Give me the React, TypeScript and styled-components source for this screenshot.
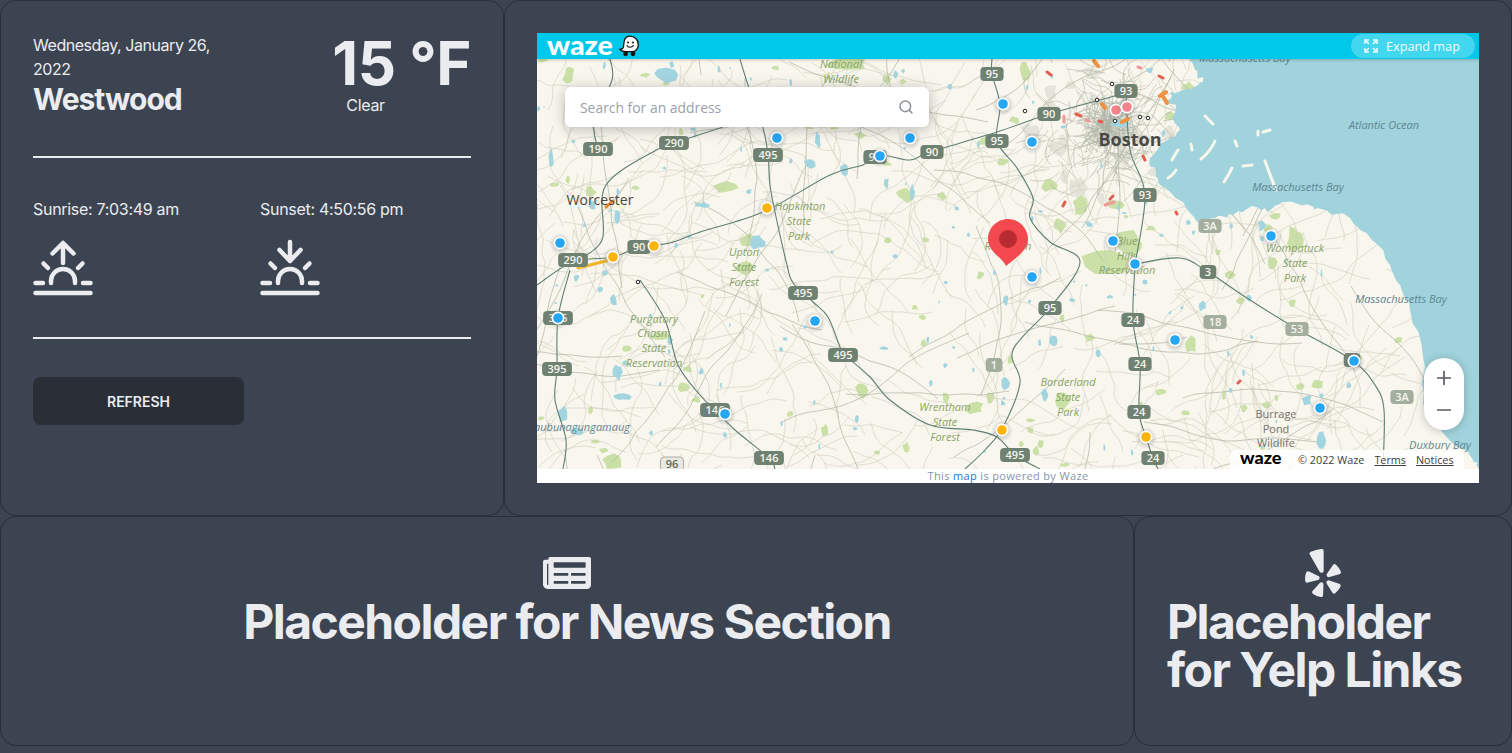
import React from "react";
import styled, { createGlobalStyle } from "styled-components";
import { FaNewspaper, FaYelp } from "react-icons/fa";
import { Search, Plus, Minus } from "lucide-react";

const GlobalStyle = createGlobalStyle`
  html, body {
    margin: 0;
    background: #3d4451;
    color: #ebecf0;
    font-family: Inter, "Liberation Sans", sans-serif;
    overflow: hidden;
  }
`;

const Page = styled.div`
  display: grid;
  grid-template-columns: 504px 630px 378px;
  grid-template-rows: 516px 230px;
  width: 1512px;
`;

const Card = styled.section<{ $wide?: boolean }>`
  grid-column: ${(p) => (p.$wide ? "span 2" : "auto")};
  box-sizing: border-box;
  border: 1px solid #2a2e37;
  border-radius: 16px;
  background: #3d4451;
  padding: 32px;
`;

const WeatherTop = styled.div`
  display: flex;
  justify-content: space-between;
  height: 123px;
  border-bottom: 2px solid #ebecf0;
`;

const Place = styled.div`
  width: 200px;
`;

const DateText = styled.div`
  font-size: 16px;
  line-height: 24px;
  letter-spacing: -0.45px;
`;

const City = styled.div`
  font-size: 30px;
  line-height: 36px;
  font-weight: 700;
  letter-spacing: -1px;
`;

const Temperature = styled.div`
  font-size: 60px;
  line-height: 60px;
  font-weight: 700;
  letter-spacing: -0.5px;
`;

const Condition = styled.div`
  font-size: 16px;
  line-height: 24px;
  padding-left: 14px;
  letter-spacing: -0.3px;
`;

const SunRow = styled.div`
  display: grid;
  grid-template-columns: 227px 1fr;
  height: 181px;
  padding-top: 41px;
  box-sizing: border-box;
  border-bottom: 2px solid #ebecf0;
`;

const SunTime = styled.div`
  font-size: 16px;
  line-height: 20px;
  margin-bottom: 20px;
  letter-spacing: -0.3px;
`;

const SunIcon = styled.svg`
  display: block;
  width: 60px;
  height: 60px;
  fill: none;
  stroke: #ebecf0;
  stroke-width: 4.5;
  stroke-linecap: round;
  stroke-linejoin: round;
`;

const RefreshButton = styled.button`
  display: block;
  width: 211px;
  height: 48px;
  margin-top: 38px;
  border: 0;
  border-radius: 8px;
  background: #2a2e37;
  color: #ebecf0;
  font-family: inherit;
  font-size: 14px;
  font-weight: 600;
`;

const Placeholder = styled.div<{ $centered?: boolean }>`
  display: flex;
  flex-direction: column;
  align-items: ${(p) => (p.$centered ? "center" : "flex-start")};
  text-align: ${(p) => (p.$centered ? "center" : "left")};
  font-size: 48px;
  line-height: 48px;
  font-weight: 700;
  letter-spacing: -1.55px;
`;

const IconLine = styled.div`
  align-self: center;
  height: 49px;
  svg {
    display: block;
  }
`;

const MapFrame = styled.div`
  position: relative;
  width: 942px;
  height: 450px;
  background: #fff;
  overflow: hidden;
`;

const MapHeader = styled.header`
  display: flex;
  align-items: center;
  justify-content: space-between;
  height: 26px;
  padding: 0 4px 0 10px;
  background: #00c8ea;
  box-shadow: 0 1px 3px rgba(0, 0, 0, 0.2);
  position: relative;
  z-index: 1;
`;

const Brand = styled.div`
  display: flex;
  align-items: center;
  gap: 5px;
`;

const WazeWord = styled.span<{ $dark?: boolean }>`
  display: inline-block;
  width: ${(p) => (p.$dark ? "42px" : "66px")};
  font-family: Lato, Inter, sans-serif;
  font-weight: 900;
  font-size: ${(p) => (p.$dark ? "17px" : "27px")};
  line-height: 1;
  color: ${(p) => (p.$dark ? "#000" : "#fff")};
  transform: scaleX(1.06);
  transform-origin: left;
  position: relative;
  top: -2px;
`;

const ExpandButton = styled.div`
  display: flex;
  align-items: center;
  gap: 8px;
  width: 124px;
  height: 24px;
  box-sizing: border-box;
  padding-left: 13px;
  border-radius: 12px;
  background: rgba(255, 255, 255, 0.26);
  color: #f0fcff;
  font-family: "Open Sans", sans-serif;
  font-size: 12.7px;
`;

const MapCanvas = styled.svg`
  display: block;
  width: 942px;
  height: 410px;
`;

const MapLabel = styled.text<{ $kind: "park" | "water" | "city" | "big" | "area" }>`
  font-family: "Open Sans", sans-serif;
  text-anchor: middle;
  font-size: ${(p) => (p.$kind === "big" ? "18px" : p.$kind === "city" ? "14px" : "11px")};
  font-weight: ${(p) => (p.$kind === "big" ? 700 : 400)};
  font-style: ${(p) => (p.$kind === "park" || p.$kind === "water" ? "italic" : "normal")};
  fill: ${(p) =>
    p.$kind === "park"
      ? "#88a36a"
      : p.$kind === "water"
        ? "#5f8593"
        : p.$kind === "area"
          ? "#77736c"
          : "#4a4845"};
`;

const ShieldText = styled.text`
  font-family: "Open Sans", sans-serif;
  font-size: 11px;
  font-weight: 600;
  text-anchor: middle;
`;

const SearchBox = styled.div`
  position: absolute;
  left: 28px;
  top: 54px;
  display: flex;
  align-items: center;
  justify-content: space-between;
  width: 364px;
  height: 40px;
  box-sizing: border-box;
  padding: 0 15px;
  border-radius: 6px;
  background: #fff;
  box-shadow: 0 2px 14px rgba(70, 70, 70, 0.35);
  color: #9aa1ad;
  font-family: "Open Sans", sans-serif;
  font-size: 13.9px;
  svg {
    color: #8b8f96;
  }
`;

const ZoomControl = styled.div`
  position: absolute;
  left: 887px;
  top: 325px;
  display: flex;
  flex-direction: column;
  align-items: center;
  justify-content: center;
  gap: 10px;
  width: 40px;
  height: 72px;
  border-radius: 20px;
  background: #fff;
  box-shadow: 0 1px 8px rgba(60, 60, 60, 0.3);
  color: #55585c;
`;

const Attribution = styled.div`
  position: absolute;
  left: 693px;
  top: 417px;
  display: flex;
  align-items: center;
  width: 234px;
  height: 19px;
  box-sizing: border-box;
  padding-left: 10px;
  border-radius: 6px 6px 0 0;
  background: rgba(255, 255, 255, 0.85);
  color: #3c3f44;
  font-family: "Open Sans", sans-serif;
  font-size: 10.8px;
`;

const Copyright = styled.span`
  margin-left: 16px;
  margin-right: 10px;
`;

const AttributionLink = styled.span`
  margin-right: 10px;
  text-decoration: underline;
`;

const MapCredit = styled.div`
  height: 14px;
  text-align: center;
  font-family: "Open Sans", sans-serif;
  font-size: 11px;
  line-height: 14px;
  letter-spacing: 0.35px;
  color: #8696a8;
  b {
    font-weight: 400;
    color: #1c76cc;
  }
`;

type Shield = [number, number, string, number?];
type Patch = [number, number, number, number];

const HIGHWAYS = [
  "740 59 748 85 763 128 768 155 770 185 775 212 787 265 793 283 813 302 828 317 840 347 845 355 870 377 890 400 930 425 973 430 997 437 1015 455 1040 469",
  "537 285 573 262 613 257 639 247 670 243 700 232 763 212 830 175 863 165 880 155 910 160 930 152 997 132 1049 114 1100 100 1130 92",
  "573 262 602 240 606 185 660 148 674 143 723 127",
  "598 149 594 120 612 80 610 59",
  "992 59 992 74 1000 105 997 141 1017 168 1033 198 1030 218 1050 242 1080 262 1050 308 1013 350 1020 383 1003 427 985 450 965 469",
  "1135 264 1133 320 1140 364 1139 412 1146 437 1153 458 1158 469",
  "1135 264 1180 258 1208 272 1250 300 1297 329 1352 360 1375 385 1384 410 1383 469",
  "1126 91 1130 150 1145 195 1135 264",
  "640 280 665 320 678 365 700 395 715 410 735 430 769 458 775 469",
  "570 270 558 318 557 369 555 400 566 440 563 469",
];

const SHIELDS: Shield[] = [
  [992, 74, "95"], [1126, 91, "93"], [1049, 114, "90"], [598, 149, "190"], [674, 143, "290"],
  [768, 155, "495"], [875, 157, "90"], [932, 152, "90"], [997, 141, "95"], [1145, 195, "93"],
  [1210, 226, "3A", 1], [639, 247, "90"], [573, 260, "290"], [1208, 272, "3"], [803, 293, "495"],
  [1050, 308, "95"], [994, 365, "1", 1], [1133, 320, "24"], [1215, 322, "18", 1], [1297, 329, "53", 1],
  [843, 355, "495"], [557, 369, "395"], [1140, 364, "24"], [1402, 397, "3A", 1], [1139, 412, "24"],
  [715, 410, "146"], [769, 458, "146"], [672, 464, "96", 2], [1015, 455, "495"], [1153, 458, "24"],
  [558, 318, "395"], [1352, 360, "3"],
];

const BLUE_PINS = [
  [1003, 104], [777, 138], [910, 138], [880, 156], [1032, 142], [560, 243], [558, 318], [815, 321],
  [725, 414], [1113, 241], [1135, 264], [1032, 277], [1175, 340], [1354, 361], [1320, 408], [1271, 236],
];
const ORANGE_PINS = [[767, 208], [654, 246], [613, 257], [1002, 430], [1146, 437]];
const PINK_PINS = [[1116, 110], [1127, 107]];
const CAMERAS = [[1112, 84], [1097, 100], [1025, 111], [1115, 121], [1140, 117], [1148, 118], [638, 282]];

const PARKS: Patch[] = [
  [569, 76, 6, 10], [847, 64, 20, 6], [1106, 262, 22, 14], [1130, 244, 18, 12], [1050, 185, 8, 7],
  [1080, 205, 8, 10], [1296, 240, 11, 14], [1272, 262, 5, 7], [1268, 228, 6, 4], [1062, 400, 10, 8],
  [748, 240, 11, 6], [744, 268, 9, 8], [661, 336, 12, 5], [627, 349, 6, 3], [990, 398, 4, 6],
  [862, 390, 8, 9], [975, 408, 9, 6], [946, 398, 5, 5], [1190, 345, 6, 9], [1318, 385, 6, 5],
  [1300, 386, 5, 4], [1160, 392, 6, 4], [612, 462, 11, 8], [860, 135, 6, 4], [834, 126, 5, 4],
  [905, 195, 9, 7], [1025, 72, 5, 10], [1115, 205, 9, 5], [725, 188, 12, 6], [590, 192, 6, 5],
  [1060, 225, 6, 8], [1015, 120, 5, 4], [1230, 275, 5, 4], [1398, 340, 5, 3], [942, 196, 5, 4],
  [1320, 50, 1, 1], [825, 430, 4, 6], [696, 400, 5, 3], [1170, 117, 5, 5], [1188, 87, 6, 5],
  [1010, 360, 3, 5], [1090, 338, 5, 4], [1244, 408, 4, 5], [1030, 430, 4, 3], [1240, 300, 4, 4],
];

const LAKES: Patch[] = [
  [664, 75, 13, 7], [810, 163, 6, 5], [818, 140, 3, 8], [844, 170, 4, 7], [551, 158, 3, 9],
  [592, 205, 4, 5], [703, 205, 7, 3], [758, 242, 8, 7], [886, 183, 3, 6], [912, 192, 3, 9],
  [617, 218, 4, 8], [613, 300, 4, 7], [618, 372, 5, 8], [622, 397, 9, 4], [563, 415, 6, 8],
  [577, 431, 8, 4], [1006, 300, 3, 6], [1072, 300, 4, 2], [1110, 297, 3, 2], [1053, 340, 4, 6],
  [1203, 305, 4, 6], [1262, 225, 4, 6], [1307, 400, 5, 5], [1322, 440, 5, 8], [1349, 385, 3, 3],
  [1089, 224, 4, 3], [1185, 200, 2, 4], [1006, 383, 4, 8], [1045, 395, 4, 6], [884, 348, 5, 2],
  [805, 327, 3, 2], [1145, 282, 3, 3], [1010, 260, 2, 3], [670, 340, 3, 5], [600, 290, 3, 3],
  [730, 68, 1, 1], [1150, 70, 4, 3], [1120, 124, 12, 4],
];

const makeRandom = (seed: number) => {
  let s = seed;
  return () => {
    s = (s * 16807) % 2147483647;
    return (s - 1) / 2147483646;
  };
};

// Catmull-Rom through the listed points, so roads bend instead of kinking
function smooth(points: number[][]) {
  let d = `M${points[0][0]} ${points[0][1]}`;
  for (let i = 0; i < points.length - 1; i++) {
    const a = points[Math.max(i - 1, 0)];
    const b = points[i];
    const c = points[i + 1];
    const e = points[Math.min(i + 2, points.length - 1)];
    d += ` C${(b[0] + (c[0] - a[0]) / 6).toFixed(1)} ${(b[1] + (c[1] - a[1]) / 6).toFixed(1)} ${(c[0] - (e[0] - b[0]) / 6).toFixed(1)} ${(c[1] - (e[1] - b[1]) / 6).toFixed(1)} ${c[0]} ${c[1]}`;
  }
  return d;
}

function toPoints(list: string) {
  const nums = list.split(" ").map(Number);
  const points: number[][] = [];
  for (let i = 0; i < nums.length; i += 2) points.push([nums[i], nums[i + 1]]);
  return points;
}

function wander(rand: () => number, x0: number, y0: number, steps: number, stepLen: number, bend: number) {
  let x = x0;
  let y = y0;
  let angle = rand() * Math.PI * 2;
  const points = [[Math.round(x), Math.round(y)]];
  for (let k = 0; k < steps; k++) {
    angle += (rand() - 0.5) * bend;
    const len = stepLen * (0.6 + rand() * 0.8);
    x += Math.cos(angle) * len;
    y += Math.sin(angle) * len;
    points.push([Math.round(x), Math.round(y)]);
  }
  return smooth(points);
}

function blob(rand: () => number, x: number, y: number, rx: number, ry: number) {
  const n = 9;
  let d = "";
  for (let k = 0; k < n; k++) {
    const a = (k / n) * Math.PI * 2;
    const r = 0.62 + rand() * 0.6;
    d += `${k ? "L" : "M"}${(x + Math.cos(a) * rx * r).toFixed(1)} ${(y + Math.sin(a) * ry * r).toFixed(1)}`;
  }
  return d + "Z";
}

const roadRand = makeRandom(4242);
const MINOR_ROADS = Array.from({ length: 520 }, () =>
  wander(roadRand, 537 + roadRand() * 890, 59 + roadRand() * 410, 5 + Math.floor(roadRand() * 6), 11, 0.9),
);
const MEDIUM_ROADS = Array.from({ length: 60 }, () =>
  wander(roadRand, 537 + roadRand() * 860, 59 + roadRand() * 410, 9, 20, 0.45),
);
const CITY_ROADS = Array.from({ length: 240 }, () => {
  const a = roadRand() * Math.PI * 2;
  const r = roadRand() * roadRand() * 105;
  return wander(roadRand, 1108 + Math.cos(a) * r, 128 + Math.sin(a) * r * 0.9, 3, 9, 1.2);
});

const patchRand = makeRandom(777);
const PARK_SHAPES = PARKS.map(([x, y, rx, ry]) => blob(patchRand, x, y, rx, ry));
const LAKE_SHAPES = LAKES.map(([x, y, rx, ry]) => blob(patchRand, x, y, rx, ry));
const SMALL_LAKES = Array.from({ length: 130 }, () =>
  blob(patchRand, 537 + patchRand() * 860, 59 + patchRand() * 410, 0.8 + patchRand() * 2, 1 + patchRand() * 3),
);
const SMALL_PARKS = Array.from({ length: 70 }, () =>
  blob(patchRand, 537 + patchRand() * 860, 59 + patchRand() * 410, 2 + patchRand() * 4, 2 + patchRand() * 3),
);
const CITY_PATCHES = Array.from({ length: 26 }, () => {
  const a = patchRand() * Math.PI * 2;
  const r = patchRand() * 85;
  return blob(patchRand, 1105 + Math.cos(a) * r, 130 + Math.sin(a) * r, 4 + patchRand() * 7, 4 + patchRand() * 7);
});

const COAST_POINTS = toPoints(
  "1190 59 1196 70 1203 82 1190 90 1172 92 1168 100 1176 108 1172 118 1180 130 1168 140 1150 158 1156 172 1160 185 1183 202 1197 222 1218 216 1233 215 1252 206 1267 212 1283 202 1317 208 1350 218 1372 240 1390 265 1400 285 1410 310 1423 357 1423 403 1443 433 1473 460 1479 469",
);

function makeCoast() {
  const rand = makeRandom(31);
  let d = `M${COAST_POINTS[0][0]} ${COAST_POINTS[0][1]}`;
  for (let i = 1; i < COAST_POINTS.length; i++) {
    const [x0, y0] = COAST_POINTS[i - 1];
    const [x1, y1] = COAST_POINTS[i];
    for (let k = 1; k <= 4; k++) {
      const t = k / 4;
      const jx = k === 4 ? 0 : (rand() - 0.5) * 5;
      const jy = k === 4 ? 0 : (rand() - 0.5) * 5;
      d += `L${(x0 + (x1 - x0) * t + jx).toFixed(1)} ${(y0 + (y1 - y0) * t + jy).toFixed(1)}`;
    }
  }
  return d + "L1479 59Z";
}

const COAST = makeCoast();

const ISLANDS = [
  "M1215 141Q1210 152 1201 159",
  "M1178 150Q1174 156 1172 160",
  "M1191 144L1192 150",
  "M1235 141L1237 146",
  "M1232 168Q1228 176 1224 182",
  "M1243 166L1252 165",
  "M1265 161Q1270 175 1276 190",
  "M1176 170Q1172 176 1168 178",
  "M1258 131L1258 135",
  "M1263 132L1270 130",
  "M1205 116L1213 124",
];

function SunriseIcon() {
  return (
    <SunIcon viewBox="0 0 60 60">
      <path d="M2.5 54h55M2.5 44h7.5M50 44h7.5M18 44v-2a12 12 0 0 1 24 0v2M10.5 24.5l4.5 4.5M49.5 24.5L45 29" />
      <path d="M30 24V5M19.5 14.5L30 4l10.5 10.5" />
    </SunIcon>
  );
}

function SunsetIcon() {
  return (
    <SunIcon viewBox="0 0 60 60">
      <path d="M2.5 54h55M2.5 44h7.5M50 44h7.5M18 44v-2a12 12 0 0 1 24 0v2M10.5 24.5l4.5 4.5M49.5 24.5L45 29" />
      <path d="M30 3v19M19.5 11L30 22l10.5-11" />
    </SunIcon>
  );
}

function Wazer() {
  return (
    <svg width="22" height="22" viewBox="0 0 22 22">
      <path
        d="M11.5 1.2c5 0 8.8 3.6 8.8 8.2 0 3.6-1.9 6-4.6 7.3H8.1c-1.9 0-4.7-.6-6.2-2.4 2.2-.2 3.2-.9 3.6-2.3C6 6 6.5 1.2 11.5 1.2z"
        fill="#fff"
        stroke="#111"
        strokeWidth="1.3"
      />
      <circle cx="10" cy="7.4" r="1" fill="#111" />
      <circle cx="15" cy="7.4" r="1" fill="#111" />
      <path d="M9 10.6c1 2 4.8 2.2 6.4 0" fill="none" stroke="#111" strokeWidth="1.1" strokeLinecap="round" />
      <circle cx="7.6" cy="18.8" r="2.4" fill="#111" />
      <circle cx="15" cy="18.8" r="2.4" fill="#111" />
    </svg>
  );
}

function ExpandIcon() {
  return (
    <svg width="14" height="14" viewBox="0 0 14 14" fill="none" stroke="#f0fcff" strokeWidth="1.5">
      <path d="M1 5V1h4M9 1h4v4M13 9v4H9M5 13H1V9" />
      <path d="M1.5 1.5L5 5M12.5 1.5L9 5M12.5 12.5L9 9M1.5 12.5L5 9" />
    </svg>
  );
}

function RoadShield({ item }: { item: Shield }) {
  const [x, y, label, tone] = item;
  const width = label.length * 6.6 + 10;
  const fill = tone === 2 ? "#e8e8df" : tone === 1 ? "#a4ae9f" : "#6f8272";
  return (
    <g>
      <rect x={x - width / 2} y={y - 7} width={width} height={14} rx={4} fill={fill} stroke={tone === 2 ? "#a9ada3" : "none"} strokeWidth={1} />
      <ShieldText x={x} y={y + 4} fill={tone === 2 ? "#5c6a5f" : "#f6f6ee"}>
        {label}
      </ShieldText>
    </g>
  );
}

function Pin({ x, y, color }: { x: number; y: number; color: string }) {
  return (
    <g>
      <circle cx={x} cy={y + 1} r={11} fill="url(#pinShadow)" />
      <circle cx={x} cy={y} r={6.5} fill="#fff" />
      <circle cx={x} cy={y} r={4.8} fill={color} />
    </g>
  );
}

function WazeMap() {
  return (
    <MapFrame>
      <MapHeader>
        <Brand>
          <WazeWord>waze</WazeWord>
          <Wazer />
        </Brand>
        <ExpandButton>
          <ExpandIcon />
          Expand map
        </ExpandButton>
      </MapHeader>
      <MapCanvas viewBox="537 59 942 410">
        <defs>
          <radialGradient id="pinShadow">
            <stop offset="50%" stopColor="#777" stopOpacity="0.3" />
            <stop offset="100%" stopColor="#777" stopOpacity="0" />
          </radialGradient>
        </defs>
        <rect x="537" y="59" width="942" height="410" fill="#f8f6ed" />
        <g fill="#e4e4da">
          {CITY_PATCHES.map((d, i) => (
            <path key={i} d={d} />
          ))}
        </g>
        <g fill="#cbe0a6">
          {SMALL_PARKS.map((d, i) => (
            <path key={i} d={d} />
          ))}
          {PARK_SHAPES.map((d, i) => (
            <path key={i} d={d} />
          ))}
        </g>
        <g fill="none" stroke="#cbcab9" strokeWidth="0.55">
          {MINOR_ROADS.map((d, i) => (
            <path key={i} d={d} />
          ))}
        </g>
        <g fill="none" stroke="#aeb3a2" strokeWidth="0.7">
          {MEDIUM_ROADS.map((d, i) => (
            <path key={i} d={d} />
          ))}
        </g>
        <g fill="none" stroke="#adb2a3" strokeWidth="0.55">
          {CITY_ROADS.map((d, i) => (
            <path key={i} d={d} />
          ))}
        </g>
        <g fill="#a3d5e0">
          {SMALL_LAKES.map((d, i) => (
            <path key={i} d={d} />
          ))}
          {LAKE_SHAPES.map((d, i) => (
            <path key={i} d={d} />
          ))}
        </g>
        <path d={COAST} fill="#a0d3dc" />
        <g fill="none" stroke="#f8f6ed" strokeWidth="3" strokeLinecap="round">
          {ISLANDS.map((d, i) => (
            <path key={i} d={d} />
          ))}
        </g>
        <g fill="none" stroke="#5f7f73" strokeWidth="1.1">
          {HIGHWAYS.map((d, i) => (
            <path key={i} d={smooth(toPoints(d))} />
          ))}
        </g>
        <path d="M578 268L610 260" stroke="#f1b52c" strokeWidth="3" strokeLinecap="round" />
        <path d="M606 207L613 201" stroke="#ea8a33" strokeWidth="3" strokeLinecap="round" />
        <g fill="none" stroke="#e2604f" strokeWidth="3" strokeLinecap="round">
          <path d="M1047 72l4 3M1076 114l5 2M1099 121l3 1M1159 76l4 2M1110 199l3-3M1063 206l2-4M1176 212l1 2M1143 156l2 4M1238 383l2-2" />
        </g>
        <g fill="none" stroke="#ee9140" strokeWidth="4" strokeLinecap="round">
          <path d="M1094 61l4 5M1160 96l6-4M1164 98l3 5M1102 104l3 4M1122 122l6-3" />
        </g>
        <g fill="none" stroke="#ef9a99" strokeWidth="3" strokeLinecap="round">
          <path d="M1105 205l9-3M1138 67l3 1M1064 116l0 6M1086 120l3 1" />
        </g>
        <g fill="#fff" stroke="#222" strokeWidth="1">
          {CAMERAS.map(([x, y], i) => (
            <circle key={i} cx={x} cy={y} r={1.8} />
          ))}
        </g>
        <MapLabel $kind="park" x="841" y="68">National</MapLabel>
        <MapLabel $kind="park" x="841" y="83">Wildlife</MapLabel>
        <MapLabel $kind="water" x="1245" y="62">Massachusetts Bay</MapLabel>
        <MapLabel $kind="water" x="1384" y="129">Atlantic Ocean</MapLabel>
        <MapLabel $kind="water" x="1298" y="191">Massachusetts Bay</MapLabel>
        <MapLabel $kind="water" x="1401" y="303">Massachusetts Bay</MapLabel>
        <MapLabel $kind="water" x="1440" y="449">Duxbury Bay</MapLabel>
        <MapLabel $kind="big" x="1130" y="146">Boston</MapLabel>
        <MapLabel $kind="city" x="600" y="205">Worcester</MapLabel>
        <MapLabel $kind="park" x="800" y="210">Hopkinton</MapLabel>
        <MapLabel $kind="park" x="799" y="225">State</MapLabel>
        <MapLabel $kind="park" x="799" y="240">Park</MapLabel>
        <MapLabel $kind="park" x="744" y="256">Upton</MapLabel>
        <MapLabel $kind="park" x="744" y="271">State</MapLabel>
        <MapLabel $kind="park" x="744" y="286">Forest</MapLabel>
        <MapLabel $kind="park" x="654" y="323">Purgatory</MapLabel>
        <MapLabel $kind="park" x="654" y="337">Chasm</MapLabel>
        <MapLabel $kind="park" x="654" y="352">State</MapLabel>
        <MapLabel $kind="park" x="654" y="367">Reservation</MapLabel>
        <MapLabel $kind="water" x="582" y="431">aubunagungamaug</MapLabel>
        <MapLabel $kind="park" x="945" y="411">Wrentham</MapLabel>
        <MapLabel $kind="park" x="945" y="426">State</MapLabel>
        <MapLabel $kind="park" x="945" y="441">Forest</MapLabel>
        <MapLabel $kind="park" x="1068" y="386">Borderland</MapLabel>
        <MapLabel $kind="park" x="1068" y="401">State</MapLabel>
        <MapLabel $kind="park" x="1068" y="416">Park</MapLabel>
        <MapLabel $kind="park" x="1127" y="245">Blue</MapLabel>
        <MapLabel $kind="park" x="1127" y="260">Hills</MapLabel>
        <MapLabel $kind="park" x="1127" y="274">Reservation</MapLabel>
        <MapLabel $kind="park" x="1295" y="252">Wompatuck</MapLabel>
        <MapLabel $kind="park" x="1295" y="267">State</MapLabel>
        <MapLabel $kind="park" x="1295" y="282">Park</MapLabel>
        <MapLabel $kind="area" x="1276" y="418">Burrage</MapLabel>
        <MapLabel $kind="area" x="1276" y="433">Pond</MapLabel>
        <MapLabel $kind="area" x="1276" y="447">Wildlife</MapLabel>
        <MapLabel $kind="park" x="1008" y="250">Randolph</MapLabel>
        {SHIELDS.map((s, i) => (
          <RoadShield key={i} item={s} />
        ))}
        {ORANGE_PINS.map(([x, y], i) => (
          <Pin key={i} x={x} y={y} color="#fdb408" />
        ))}
        {BLUE_PINS.map(([x, y], i) => (
          <Pin key={i} x={x} y={y} color="#25a5f2" />
        ))}
        {PINK_PINS.map(([x, y], i) => (
          <Pin key={i} x={x} y={y} color="#f6838b" />
        ))}
        <path
          d="M1008 219c11 0 20 9 20 20 0 12-13 19-22 27-3-8-18-14-18-27 0-11 9-20 20-20z"
          fill="#f4494f"
        />
        <circle cx="1008" cy="239" r="9" fill="#b72a30" />
      </MapCanvas>
      <SearchBox>
        Search for an address
        <Search size={16} strokeWidth={2.2} />
      </SearchBox>
      <ZoomControl>
        <Plus size={22} strokeWidth={1.8} />
        <Minus size={22} strokeWidth={1.8} />
      </ZoomControl>
      <Attribution>
        <WazeWord $dark>waze</WazeWord>
        <Copyright>© 2022 Waze</Copyright>
        <AttributionLink>Terms</AttributionLink>
        <AttributionLink>Notices</AttributionLink>
      </Attribution>
      <MapCredit>
        This <b>map</b> is powered by Waze
      </MapCredit>
    </MapFrame>
  );
}

export default function App() {
  return (
    <Page>
      <GlobalStyle />
      <Card>
        <WeatherTop>
          <Place>
            <DateText>Wednesday, January 26, 2022</DateText>
            <City>Westwood</City>
          </Place>
          <div>
            <Temperature>15 °F</Temperature>
            <Condition>Clear</Condition>
          </div>
        </WeatherTop>
        <SunRow>
          <div>
            <SunTime>Sunrise: 7:03:49 am</SunTime>
            <SunriseIcon />
          </div>
          <div>
            <SunTime>Sunset: 4:50:56 pm</SunTime>
            <SunsetIcon />
          </div>
        </SunRow>
        <RefreshButton>REFRESH</RefreshButton>
      </Card>
      <Card $wide>
        <WazeMap />
      </Card>
      <Card $wide>
        <Placeholder $centered>
          <IconLine>
            <FaNewspaper size={48} />
          </IconLine>
          Placeholder for News Section
        </Placeholder>
      </Card>
      <Card>
        <Placeholder>
          <IconLine>
            <FaYelp size={48} />
          </IconLine>
          Placeholder for Yelp Links
        </Placeholder>
      </Card>
    </Page>
  );
}
